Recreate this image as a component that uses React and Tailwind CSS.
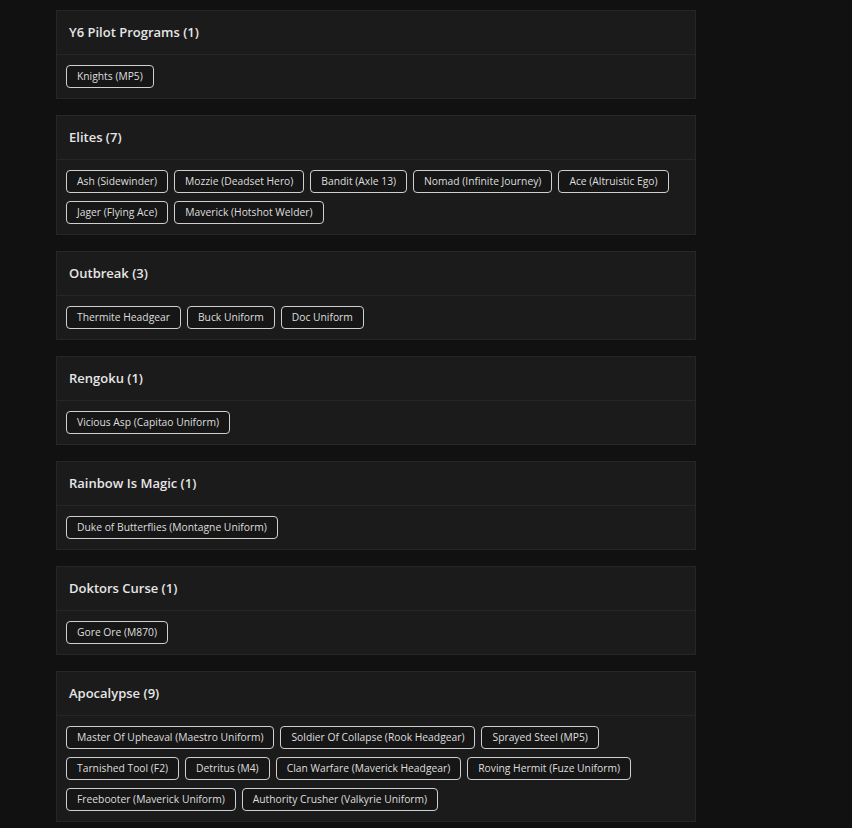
import React from 'react';

const groups = [
  { name: 'Y6 Pilot Programs', items: ['Knights (MP5)'] },
  {
    name: 'Elites',
    items: [
      'Ash (Sidewinder)',
      'Mozzie (Deadset Hero)',
      'Bandit (Axle 13)',
      'Nomad (Infinite Journey)',
      'Ace (Altruistic Ego)',
      'Jager (Flying Ace)',
      'Maverick (Hotshot Welder)',
    ],
  },
  { name: 'Outbreak', items: ['Thermite Headgear', 'Buck Uniform', 'Doc Uniform'] },
  { name: 'Rengoku', items: ['Vicious Asp (Capitao Uniform)'] },
  { name: 'Rainbow Is Magic', items: ['Duke of Butterflies (Montagne Uniform)'] },
  { name: 'Doktors Curse', items: ['Gore Ore (M870)'] },
  {
    name: 'Apocalypse',
    items: [
      'Master Of Upheaval (Maestro Uniform)',
      'Soldier Of Collapse (Rook Headgear)',
      'Sprayed Steel (MP5)',
      'Tarnished Tool (F2)',
      'Detritus (M4)',
      'Clan Warfare (Maverick Headgear)',
      'Roving Hermit (Fuze Uniform)',
      'Freebooter (Maverick Uniform)',
      'Authority Crusher (Valkyrie Uniform)',
    ],
  },
];

const Group = ({ name, items }) => (
  <div className="border border-[#262626] bg-[#1b1b1b]">
    <div className="h-[44px] flex items-center px-3 border-b border-[#262626]">
      <h3 className="text-[13px] font-semibold text-[#e6e6e6]">
        {name} ({items.length})
      </h3>
    </div>
    <div className="flex flex-wrap gap-x-[6px] gap-y-[8px] px-[9px] py-[10px]">
      {items.map((item) => (
        <span
          key={item}
          className="h-[23px] px-[10px] flex items-center rounded-[4px] border border-[#cfcfcf] bg-[#161616] text-[10.3px] text-[#dedede] whitespace-nowrap"
        >
          {item}
        </span>
      ))}
    </div>
  </div>
);

export default function App() {
  return (
    <div
      className="min-h-screen bg-[#111111] pt-[10px] pl-[56px]"
      style={{ fontFamily: '"Open Sans", "Liberation Sans", sans-serif' }}
    >
      <div className="w-[640px] flex flex-col gap-[16px]">
        {groups.map((g) => (
          <Group key={g.name} {...g} />
        ))}
      </div>
    </div>
  );
}
